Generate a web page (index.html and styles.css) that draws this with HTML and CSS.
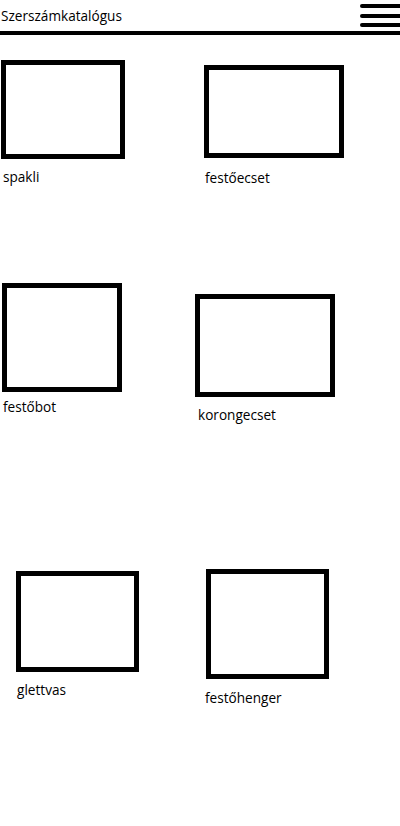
FILE: index.html
```html
<!DOCTYPE html>
<html lang="hu">
<head>
    <meta charset="UTF-8">
    <meta name="viewport" content="width=device-width, initial-scale=1.0">
    <title>Szerszámkatalógus</title>
    <link rel="stylesheet" href="styles.css">
</head>
<body>
    <header class="topbar">
        <h1 class="title">Szerszámkatalógus</h1>
        <div class="menu-icon">
            <span></span>
            <span></span>
            <span></span>
        </div>
    </header>

    <!-- katalógus -->
    <main class="catalog">
        <div class="tool tool-1">
            <div class="frame"></div>
            <p class="name">spakli</p>
        </div>
        <div class="tool tool-2">
            <div class="frame"></div>
            <p class="name">festőecset</p>
        </div>
        <div class="tool tool-3">
            <div class="frame"></div>
            <p class="name">festőbot</p>
        </div>
        <div class="tool tool-4">
            <div class="frame"></div>
            <p class="name">korongecset</p>
        </div>
        <div class="tool tool-5">
            <div class="frame"></div>
            <p class="name">glettvas</p>
        </div>
        <div class="tool tool-6">
            <div class="frame"></div>
            <p class="name">festőhenger</p>
        </div>
    </main>
</body>
</html>
```

FILE: styles.css
```css
* {
    margin: 0;
    padding: 0;
    box-sizing: border-box;
}

body {
    width: 400px;
    height: 826px;
    overflow: hidden;
    background: white;
    color: black;
    font-family: "Open Sans", "Noto Sans", sans-serif;
    font-size: 13.6px;
    line-height: 18px;
}

/* fejléc */
.topbar {
    display: flex;
    align-items: center;
    height: 35px;
    border-bottom: 4px solid black;
}

.title {
    font-size: 13.6px;
    font-weight: normal;
    line-height: 18px;
    padding-left: 1px;
}

.menu-icon {
    margin-left: auto;
    align-self: flex-start;
    width: 40px;
}

.menu-icon span {
    display: block;
    height: 4px;
    background: black;
    border-radius: 2px 0 0 2px;
}

.menu-icon span:nth-child(1) { margin-top: 4px; }
.menu-icon span:nth-child(2) { margin-top: 6px; }
.menu-icon span:nth-child(3) { margin-top: 5px; }

/* rács */
.catalog {
    display: grid;
    grid-template-columns: 195px 1fr;
    grid-template-rows: 235px 285px auto;
}

.tool {
    margin-left: var(--x);
    margin-top: var(--y);
}

.frame {
    width: var(--w);
    height: var(--h);
    border: 5px solid black;
}

.name {
    margin-left: var(--nx);
    margin-top: var(--ny);
}

.tool-1 { --x: 1px;  --y: 25px; --w: 124px; --h: 99px;  --nx: 2px;  --ny: 9px; }
.tool-2 { --x: 9px;  --y: 30px; --w: 140px; --h: 93px;  --nx: 1px;  --ny: 11px; }
.tool-3 { --x: 2px;  --y: 13px; --w: 120px; --h: 109px; --nx: 1px;  --ny: 6px; }
.tool-4 { --x: 0px;  --y: 24px; --w: 140px; --h: 103px; --nx: 3px;  --ny: 9px; }
.tool-5 { --x: 16px; --y: 16px; --w: 123px; --h: 101px; --nx: 1px;  --ny: 9px; }
.tool-6 { --x: 11px; --y: 14px; --w: 123px; --h: 110px; --nx: -1px; --ny: 10px; }
```
